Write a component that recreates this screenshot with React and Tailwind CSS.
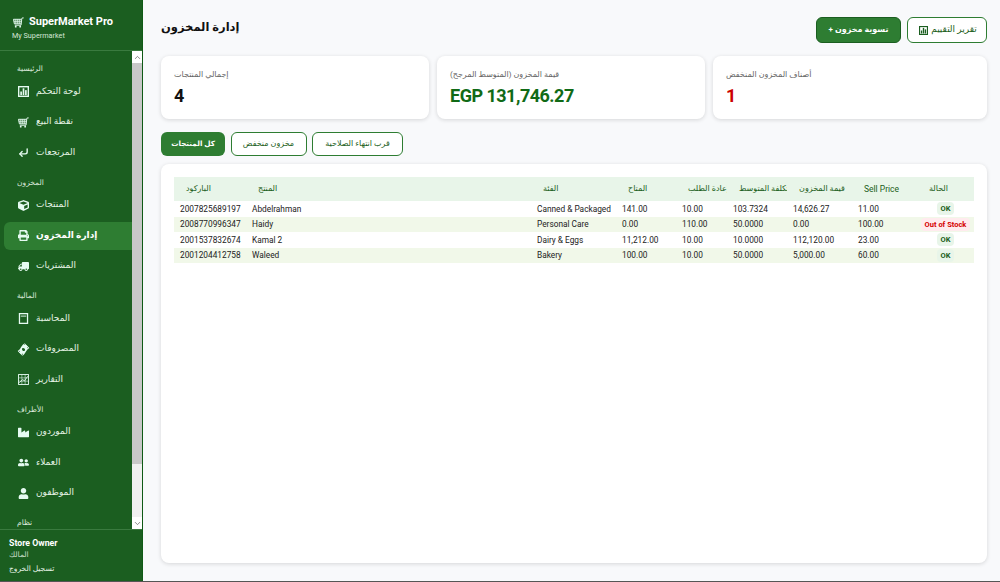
import React from 'react'
import {
  FaCube,
  FaIndustry,
  FaMoneyBillWave,
  FaPrint,
  FaTruck,
  FaUser,
  FaUserFriends,
} from 'react-icons/fa'
import { FiChevronDown, FiChevronUp, FiCornerDownLeft } from 'react-icons/fi'

/* ── small drawn icons, the packages have nothing close ── */
function BarsIcon({ size = 11, className = '' }) {
  return (
    <svg width={size} height={size} viewBox="0 0 12 12" className={className}>
      <rect x="0.75" y="0.75" width="10.5" height="10.5" fill="none" stroke="currentColor" strokeWidth="1.5" />
      <rect x="2.5" y="6" width="1.8" height="4" fill="currentColor" />
      <rect x="5.1" y="2.5" width="1.8" height="7.5" fill="currentColor" />
      <rect x="7.7" y="4.5" width="1.8" height="5.5" fill="currentColor" />
    </svg>
  )
}

function CartIcon({ size = 11, className = '' }) {
  return (
    <svg width={size} height={size} viewBox="0 0 12 12" className={className} fill="none" stroke="currentColor">
      <path d="M0.5 2.5H9.5L9 7.5H1.5Z" fill="currentColor" fillOpacity="0.35" strokeWidth="1" />
      <path d="M3 2.5V7.5M5 2.5V7.5M7 2.5V7.5M1 5H9.3" strokeWidth="0.7" />
      <path d="M9.5 2.5L10 1H11.7M9 7.5L8.7 9H2" strokeWidth="1" />
      <circle cx="3" cy="10.5" r="1" fill="currentColor" stroke="none" />
      <circle cx="7.8" cy="10.5" r="1" fill="currentColor" stroke="none" />
    </svg>
  )
}

function LedgerIcon({ size = 11, className = '' }) {
  return (
    <svg width={size} height={size} viewBox="0 0 12 12" className={className} fill="none" stroke="currentColor">
      <rect x="1.6" y="0.7" width="8.8" height="10.6" strokeWidth="1.4" />
      <path d="M3 3.4H9" strokeWidth="1" />
    </svg>
  )
}

function GridChartIcon({ size = 11, className = '' }) {
  return (
    <svg width={size} height={size} viewBox="0 0 12 12" className={className} fill="none" stroke="currentColor">
      <rect x="0.6" y="0.6" width="10.8" height="10.8" strokeWidth="1" />
      <path d="M4.2 1V11M7.8 1V11M1 4.2H11M1 7.8H11" strokeWidth="0.6" />
      <path d="M1.5 9.5L5 6L7 7.5L10.5 2.5" strokeWidth="1" />
    </svg>
  )
}

function ReturnIcon({ size = 11, className = '' }) {
  return <FiCornerDownLeft size={size} strokeWidth={3} className={className} />
}

function TruckIcon({ size = 11, className = '' }) {
  return <FaTruck size={size} className={`-scale-x-100 ${className}`} />
}

function ExpenseIcon({ size = 11, className = '' }) {
  return <FaMoneyBillWave size={size} className={`-rotate-45 ${className}`} />
}

const navGroups = [
  {
    title: 'الرئيسية',
    items: [
      { Icon: BarsIcon, label: 'لوحة التحكم' },
      { Icon: CartIcon, label: 'نقطة البيع' },
      { Icon: ReturnIcon, label: 'المرتجعات' },
    ],
  },
  {
    title: 'المخزون',
    items: [
      { Icon: FaCube, label: 'المنتجات' },
      { Icon: FaPrint, label: 'إدارة المخزون', active: true },
      { Icon: TruckIcon, label: 'المشتريات' },
    ],
  },
  {
    title: 'المالية',
    items: [
      { Icon: LedgerIcon, label: 'المحاسبة' },
      { Icon: ExpenseIcon, label: 'المصروفات' },
      { Icon: GridChartIcon, label: 'التقارير' },
    ],
  },
  {
    title: 'الأطراف',
    items: [
      { Icon: FaIndustry, label: 'الموردون' },
      { Icon: FaUserFriends, label: 'العملاء' },
      { Icon: FaUser, label: 'الموظفون' },
    ],
  },
]

const headers = ['الباركود', 'المنتج', 'الفئة', 'المتاح', 'إعادة الطلب', 'تكلفة المتوسط', 'قيمة المخزون', 'Sell Price', 'الحالة']

const rows = [
  ['2007825689197', 'Abdelrahman', 'Canned & Packaged', '141.00', '10.00', '103.7324', '14,626.27', '11.00', 'OK'],
  ['2008770996347', 'Haidy', 'Personal Care', '0.00', '110.00', '50.0000', '0.00', '100.00', 'Out of Stock'],
  ['2001537832674', 'Kamal 2', 'Dairy & Eggs', '11,212.00', '10.00', '10.0000', '112,120.00', '23.00', 'OK'],
  ['2001204412758', 'Waleed', 'Bakery', '100.00', '10.00', '50.0000', '5,000.00', '60.00', 'OK'],
]

const columns = 'grid grid-cols-[72px_285px_85px_60px_51px_60px_65px_65px_57px]'

function Sidebar() {
  return (
    <aside className="flex h-full w-[143px] shrink-0 flex-col border-r border-[#0f5a15] bg-[#1b5e20] text-white">
      <div className="h-[51px] shrink-0 border-b border-[#3a7a3f] pl-[12px] pt-[14px]">
        <div className="flex items-center gap-[5px] pl-px text-[11px] font-bold leading-[16px]">
          <CartIcon size={11} className="text-[#e6fbf2]" />
          <span>SuperMarket Pro</span>
        </div>
        <div className="text-[7.25px] leading-[11px] text-[#d5e6d6]">My Supermarket</div>
      </div>

      <div className="flex min-h-0 flex-1">
        <nav className="min-w-0 flex-1 overflow-hidden pt-[12px]">
          {navGroups.map((group) => (
            <div key={group.title} className="mb-[10px]">
              <div className="h-[12px] pl-[17px] text-[7.5px] leading-[12px] text-[#dbe9dc]">{group.title}</div>
              {group.items.map(({ Icon, label, active }) => (
                <div
                  key={label}
                  className={`ml-1 mt-[2.5px] flex h-[28px] items-center gap-[7px] rounded-l-md pl-[14px] text-[9px] ${
                    active ? 'bg-[#2e7d32] font-bold text-white' : 'text-[#e3f2e4]'
                  }`}
                >
                  <Icon size={11} className="shrink-0 text-[#e6fbf2]" />
                  <span>{label}</span>
                </div>
              ))}
            </div>
          ))}
          <div className="h-[12px] pl-[17px] text-[7.5px] leading-[12px] text-[#dbe9dc]">نظام</div>
        </nav>

        <div className="flex w-[10px] shrink-0 flex-col bg-[#f0f0f0] text-[#666]">
          <div className="flex h-[12px] items-center justify-center bg-white">
            <FiChevronUp size={9} />
          </div>
          <div className="h-[401px] bg-[#c8c8c8]" />
          <div className="flex-1" />
          <div className="flex h-[12px] items-center justify-center bg-white">
            <FiChevronDown size={9} />
          </div>
        </div>
      </div>

      <div className="h-[52px] shrink-0 border-t border-[#3a7a3f] pl-[9px] pt-[7px]">
        <div className="text-[8.75px] font-bold leading-[13px]">Store Owner</div>
        <div className="text-[7.5px] leading-[10px] text-[#c9dfca]">المالك</div>
        <div className="mt-[3px] text-[7.5px] leading-[12px] text-[#e3f2e4]">تسجيل الخروج</div>
      </div>
    </aside>
  )
}

function StatCard({ label, value, color }) {
  return (
    <div className="rounded-lg bg-white pl-[13px] pt-[13px] shadow-[0_1px_4px_rgba(0,0,0,0.14)]">
      <div className="text-[8px] leading-[12px] text-[#666]">{label}</div>
      <div className={`mt-[3px] text-[18px] font-bold leading-[24px] tracking-[-0.5px] ${color}`}>{value}</div>
    </div>
  )
}

function Status({ value }) {
  const out = value !== 'OK'
  return (
    <span
      className={`rounded px-[4px] text-[7.5px] font-bold leading-[13px] ${
        out ? 'bg-[#ffebee] text-[#d50000]' : 'bg-[#e8f5e9] text-[#1b5e20]'
      }`}
    >
      {value}
    </span>
  )
}

export default function App() {
  return (
    <div className='flex h-[582px] w-[1000px] overflow-hidden border-b border-[#555] bg-[#f8f9fb] font-["Roboto","DejaVu_Sans",sans-serif]'>
      <Sidebar />

      <main className="min-w-0 flex-1 pl-[18px] pr-[13px] pt-[17px]">
        <header className="flex h-[26px] items-center justify-between">
          <h1 className="pb-[4px] text-[11.5px] font-bold text-[#111]">إدارة المخزون</h1>
          <div className="flex gap-[6px]">
            <button className="flex h-[26px] w-[85px] items-center justify-center rounded-md border border-[#1b5e20] bg-[#2e7d32] text-[8px] font-bold text-white">
              + تسوية مخزون
            </button>
            <button className="flex h-[26px] w-[80px] items-center justify-center gap-[3px] rounded-md border border-[#2e7d32] bg-white pl-[2px] text-[9px] text-[#1b5e20]">
              <BarsIcon size={9} />
              تقرير التقييم
            </button>
          </div>
        </header>

        <section className="mt-[13px] grid h-[63px] grid-cols-[268px_268px_1fr] gap-[8px]">
          <StatCard label="إجمالي المنتجات" value="4" color="text-[#111]" />
          <StatCard label="قيمة المخزون (المتوسط المرجح)" value="EGP 131,746.27" color="text-[#106a16]" />
          <StatCard label="أصناف المخزون المنخفض" value="1" color="text-[#cc0000]" />
        </section>

        <div className="mt-[13px] flex gap-[5.5px]">
          <button className="h-[24px] w-[64px] rounded-md bg-[#2e7d32] text-[7.25px] font-bold text-white">كل المنتجات</button>
          <button className="h-[24px] w-[76px] rounded-md border border-[#2e7d32] bg-white text-[8px] text-[#1b5e20]">مخزون منخفض</button>
          <button className="h-[24px] w-[91px] rounded-md border border-[#2e7d32] bg-white text-[8px] text-[#1b5e20]">قرب انتهاء الصلاحية</button>
        </div>

        <section className="mt-[8px] h-[399px] rounded-lg bg-white px-[13px] pt-[13px] shadow-[0_1px_4px_rgba(0,0,0,0.14)]">
          <div className={`${columns} h-[24px] items-center bg-[#e8f5e9] text-[8px] text-[#1b5e20]`}>
            {headers.map((h) => (
              <div
                key={h}
                className={`overflow-hidden whitespace-nowrap pl-[12px] pr-[3px] ${h === 'Sell Price' ? 'text-[8.5px]' : ''}`}
              >
                {h}
              </div>
            ))}
          </div>
          {rows.map((row, r) => (
            <div
              key={row[0]}
              className={`${columns} h-[15.5px] items-center text-[8.3px] text-[#222] ${r % 2 ? 'bg-[#f1f8e9]' : 'bg-white'}`}
            >
              {row.map((cell, i) =>
                i === 8 ? (
                  <div key={i} className="flex justify-center whitespace-nowrap">
                    <Status value={cell} />
                  </div>
                ) : (
                  <div key={i} className="whitespace-nowrap pl-[6px]">{cell}</div>
                ),
              )}
            </div>
          ))}
        </section>
      </main>
    </div>
  )
}
